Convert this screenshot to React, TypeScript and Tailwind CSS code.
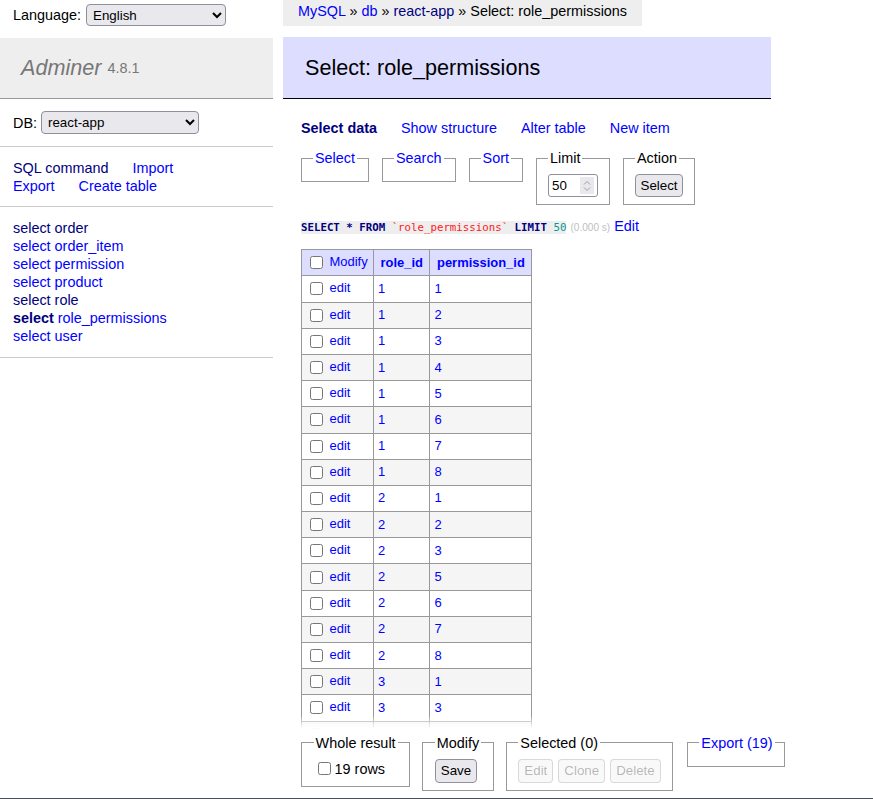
import React from 'react';

const rows: [number, number][] = [
  [1, 1], [1, 2], [1, 3], [1, 4], [1, 5], [1, 6], [1, 7], [1, 8],
  [2, 1], [2, 2], [2, 3], [2, 5], [2, 6], [2, 7], [2, 8],
  [3, 1], [3, 3], [3, 5], [3, 6],
];

const tables = ['order', 'order_item', 'permission', 'product', 'role', 'role_permissions', 'user'];
const visitedTables = ['order', 'role'];

function Fieldset({
  legend,
  children,
  wide,
  className = '',
}: {
  legend: React.ReactNode;
  children?: React.ReactNode;
  wide?: boolean;
  className?: string;
}) {
  return (
    <fieldset
      className={`min-w-0 shrink-0 whitespace-nowrap border border-[#999] py-[7.2px] ${wide ? 'px-[11.6px]' : 'px-[11px]'} ${className}`}
    >
      <legend className="px-[2px] leading-[18px]">{legend}</legend>
      {children}
    </fieldset>
  );
}

function Check() {
  return <input type="checkbox" readOnly className="m-[3px_3px_3px_4px] h-[13px] w-[13px] align-middle" />;
}

function Btn({ children, disabled }: { children: React.ReactNode; disabled?: boolean }) {
  return (
    <button
      disabled={disabled}
      className={
        disabled
          ? 'h-[24px] rounded-[4px] border border-[#76767640] bg-[#efefef66] px-[5px] text-[13.33px] text-[#1010104d]'
          : 'h-[24px] rounded-[4px] border border-[#8f8f9d] bg-[#e9e9ed] px-[5px] text-[13.33px] text-black'
      }
    >
      {children}
    </button>
  );
}

function Sidebar() {
  return (
    <aside className="w-[273px] shrink-0">
      {/* Language */}
      <div className="flex h-[30px] items-center gap-[5px] px-[13px]">
        <span>Language:</span>
        <select className="h-[22px] w-[140px] rounded-[4px] border border-[#8f8f9d] bg-[#e9e9ed] pl-[2px] text-[13.33px]">
          <option>English</option>
        </select>
      </div>

      {/* Logo */}
      <h1 className="mt-[8px] flex h-[61px] items-center border-b border-[#999] bg-[#eee] px-[21px] text-[21.6px] font-normal text-[#777]">
        <a className="italic">Adminer</a>
        <span className="ml-[6px] text-[14.4px]">4.8.1</span>
      </h1>

      {/* DB select */}
      <div className="flex h-[48px] items-center gap-[4px] border-b border-[#ccc] px-[13px]">
        <span>DB:</span>
        <select className="h-[23px] w-[158px] rounded-[4px] border border-[#8f8f9d] bg-[#e9e9ed] pl-[2px] text-[13.33px]">
          <option>react-app</option>
        </select>
      </div>

      {/* Links */}
      <div className="border-b border-[#ccc] px-[13px] pb-[11px] pt-[12px]">
        <div className="flex gap-[24px]">
          <a className="text-[#000080]">SQL command</a>
          <a className="text-[#0000ff]">Import</a>
        </div>
        <div className="flex gap-[24px]">
          <a className="text-[#0000ff]">Export</a>
          <a className="text-[#0000ff]">Create table</a>
        </div>
      </div>

      {/* Tables */}
      <ul className="border-b border-[#ccc] px-[13px] pb-[12px] pt-[12px]">
        {tables.map((t) => {
          const visited = visitedTables.includes(t);
          const active = t === 'role_permissions';
          return (
            <li key={t}>
              <a className={active ? 'font-bold text-[#000080]' : visited ? 'text-[#000080]' : 'text-[#0000ff]'}>select</a>{' '}
              <a className={visited ? 'text-[#000080]' : 'text-[#0000ff]'}>{t}</a>
            </li>
          );
        })}
      </ul>
    </aside>
  );
}

export default function App() {
  return (
    <div className="flex h-[799px] w-[873px] overflow-hidden border-b border-[#4b5157] bg-white font-['Liberation_Sans',Arial,sans-serif] text-[14.4px] leading-[18px] text-black">
      <Sidebar />

      <main className="ml-[10px] flex w-[488px] shrink-0 flex-col">
        {/* Breadcrumb */}
        <div className="h-[26px] self-start whitespace-nowrap bg-[#eee] px-[15px] leading-[22px]">
          <a className="text-[#0000ff]">MySQL</a> » <a className="text-[#0000ff]">db</a> »{' '}
          <a className="text-[#000080]">react-app</a> » Select: role_permissions
        </div>

        <h2 className="mt-[11px] flex h-[62px] items-center border-b border-black bg-[#ddf] px-[22px] text-[21.6px] font-normal leading-[27px]">
          Select: role_permissions
        </h2>

        <div className="flex min-h-0 flex-1 flex-col pl-[18px]">
          {/* Top links */}
          <div className="mt-[20px] flex gap-[24px]">
            <a className="font-bold text-[#000080]">Select data</a>
            <a className="text-[#0000ff]">Show structure</a>
            <a className="text-[#0000ff]">Alter table</a>
            <a className="text-[#0000ff]">New item</a>
          </div>

          {/* Filters */}
          <div className="mt-[12px] flex items-start gap-[13px]">
            <Fieldset legend={<a className="text-[#0000ff]">Select</a>} />
            <Fieldset legend={<a className="text-[#0000ff]">Search</a>} />
            <Fieldset legend={<a className="text-[#0000ff]">Sort</a>} />
            <Fieldset legend="Limit">
              <div className="flex h-[23px] w-[50px] items-center rounded-[3px] border border-[#8f8f9d] bg-white pl-[3px] pr-[3px] text-[13.33px]">
                <span className="flex-1">50</span>
                <span className="flex h-[17px] w-[14px] flex-col items-center justify-center bg-[#e9e9ed]">
                  <svg width="8" height="5" viewBox="0 0 8 5" className="mb-[2px]">
                    <path d="M1 4.5 L4 1.5 L7 4.5" fill="none" stroke="#a0a0a0" strokeWidth="1" />
                  </svg>
                  <svg width="8" height="5" viewBox="0 0 8 5">
                    <path d="M1 0.5 L4 3.5 L7 0.5" fill="none" stroke="#a0a0a0" strokeWidth="1" />
                  </svg>
                </span>
              </div>
            </Fieldset>
            <Fieldset legend="Action">
              <button className="h-[23px] rounded-[4px] border border-[#8f8f9d] bg-[#e9e9ed] px-[4.5px] text-[13.33px]">Select</button>
            </Fieldset>
          </div>

          {/* Query */}
          <p className="mt-[12px] whitespace-nowrap">
            <code className="bg-[#eee] font-['DejaVu_Sans_Mono',monospace] text-[10.75px]">
              <span className="font-bold text-[#000080]">SELECT * FROM</span>{' '}
              <span className="text-[#ff2020]">`role_permissions`</span>{' '}
              <span className="font-bold text-[#000080]">LIMIT</span>{' '}
              <span className="text-[#009999]">50</span>
            </code>{' '}
            <span className="text-[10.08px] text-[#c0c0c0]">(0.000 s)</span> <a className="text-[#0000ff]">Edit</a>
          </p>

          {/* Results */}
          <div className="min-h-0 flex-1 overflow-hidden">
            <table className="mt-[12px] border-collapse border-l border-t border-[#999] text-[12.96px] leading-[16px]">
              <thead>
                <tr className="bg-[#ddf]">
                  <td className="h-[26px] w-[72px] whitespace-nowrap border-b border-r border-[#999] px-[3.9px]">
                    <Check /> <a className="text-[#0000ff]">Modify</a>
                  </td>
                  <th className="h-[26px] border-b border-r border-[#999] px-[6.5px] text-center">
                    <a className="text-[#0000ff]">role_id</a>
                  </th>
                  <th className="h-[26px] border-b border-r border-[#999] px-[6.5px] text-center">
                    <a className="text-[#0000ff]">permission_id</a>
                  </th>
                </tr>
              </thead>
              <tbody>
                {rows.map(([r, p], i) => (
                  <tr key={i} className={i % 2 === 1 ? 'bg-[#f5f5f5]' : 'bg-white'}>
                    <td className="h-[26.2px] whitespace-nowrap border-b border-r border-[#999] px-[3.9px]">
                      <Check /> <a className="text-[#0000ff]">edit</a>
                    </td>
                    <td className="h-[26.2px] border-b border-r border-[#999] px-[3.9px]">
                      <a className="text-[#0000ff]">{r}</a>
                    </td>
                    <td className="h-[26.2px] border-b border-r border-[#999] px-[3.9px]">
                      <a className="text-[#0000ff]">{p}</a>
                    </td>
                  </tr>
                ))}
              </tbody>
            </table>
          </div>

          {/* Sticky footer */}
          <div className="relative z-10 -mt-[12px] shrink-0">
            <div className="h-[12px] bg-linear-to-b from-white/20 to-white" />
            <div className="flex w-max items-start gap-[12px] bg-white pb-[7px] pt-[5px]">
              <Fieldset legend="Whole result" wide>
                <label className="flex h-[20px] items-center">
                  <Check />
                  <span className="ml-[1px]">19 rows</span>
                </label>
              </Fieldset>
              <Fieldset legend="Modify" wide>
                <Btn>Save</Btn>
              </Fieldset>
              <Fieldset legend="Selected (0)" wide>
                <div className="flex gap-[5px]">
                  <Btn disabled>Edit</Btn>
                  <Btn disabled>Clone</Btn>
                  <Btn disabled>Delete</Btn>
                </div>
              </Fieldset>
              <Fieldset legend={<a className="text-[#0000ff]">Export (19)</a>} wide className="ml-[1.5px] w-[98px]" />
            </div>
          </div>
        </div>
      </main>
    </div>
  );
}
